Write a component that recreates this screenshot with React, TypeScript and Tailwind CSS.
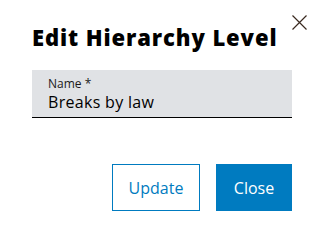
export default function App() {
  return (
    <div className="w-[324px] h-[244px] bg-white relative" style={{ fontFamily: '"Open Sans", "Noto Sans", sans-serif' }}>
      <button className="absolute left-[291px] top-[14px] w-[17px] h-[17px] text-[#3a2a20]">
        <svg viewBox="0 0 17 17" className="w-[17px] h-[17px]" fill="none" stroke="currentColor" strokeWidth="1.2">
          <path d="M1.5 1.5L15.5 15.5M15.5 1.5L1.5 15.5" />
        </svg>
      </button>
      <div className="pt-[22px] pl-[32px] pr-[32px]">
        <h1 className="text-[22px] leading-[30px] font-extrabold text-black tracking-[0.9px]">Edit Hierarchy Level</h1>
        <div className="mt-[18px] h-[48px] bg-[#e0e2e5] border-b border-black pl-[16px] pt-[6px]">
          <div className="text-[12px] leading-[16px] text-[#1a1a1a]">Name *</div>
          <div className="text-[16px] leading-[21px] text-black tracking-[0.3px]">Breaks by law</div>
        </div>
        <div className="mt-[46px] flex justify-end gap-[16px]">
          <button className="w-[88px] h-[47px] border border-[#007bc0] text-[#007bc0] text-[16px]">Update</button>
          <button className="w-[76px] h-[47px] bg-[#007bc0] text-white text-[16px]">Close</button>
        </div>
      </div>
    </div>
  )
}
